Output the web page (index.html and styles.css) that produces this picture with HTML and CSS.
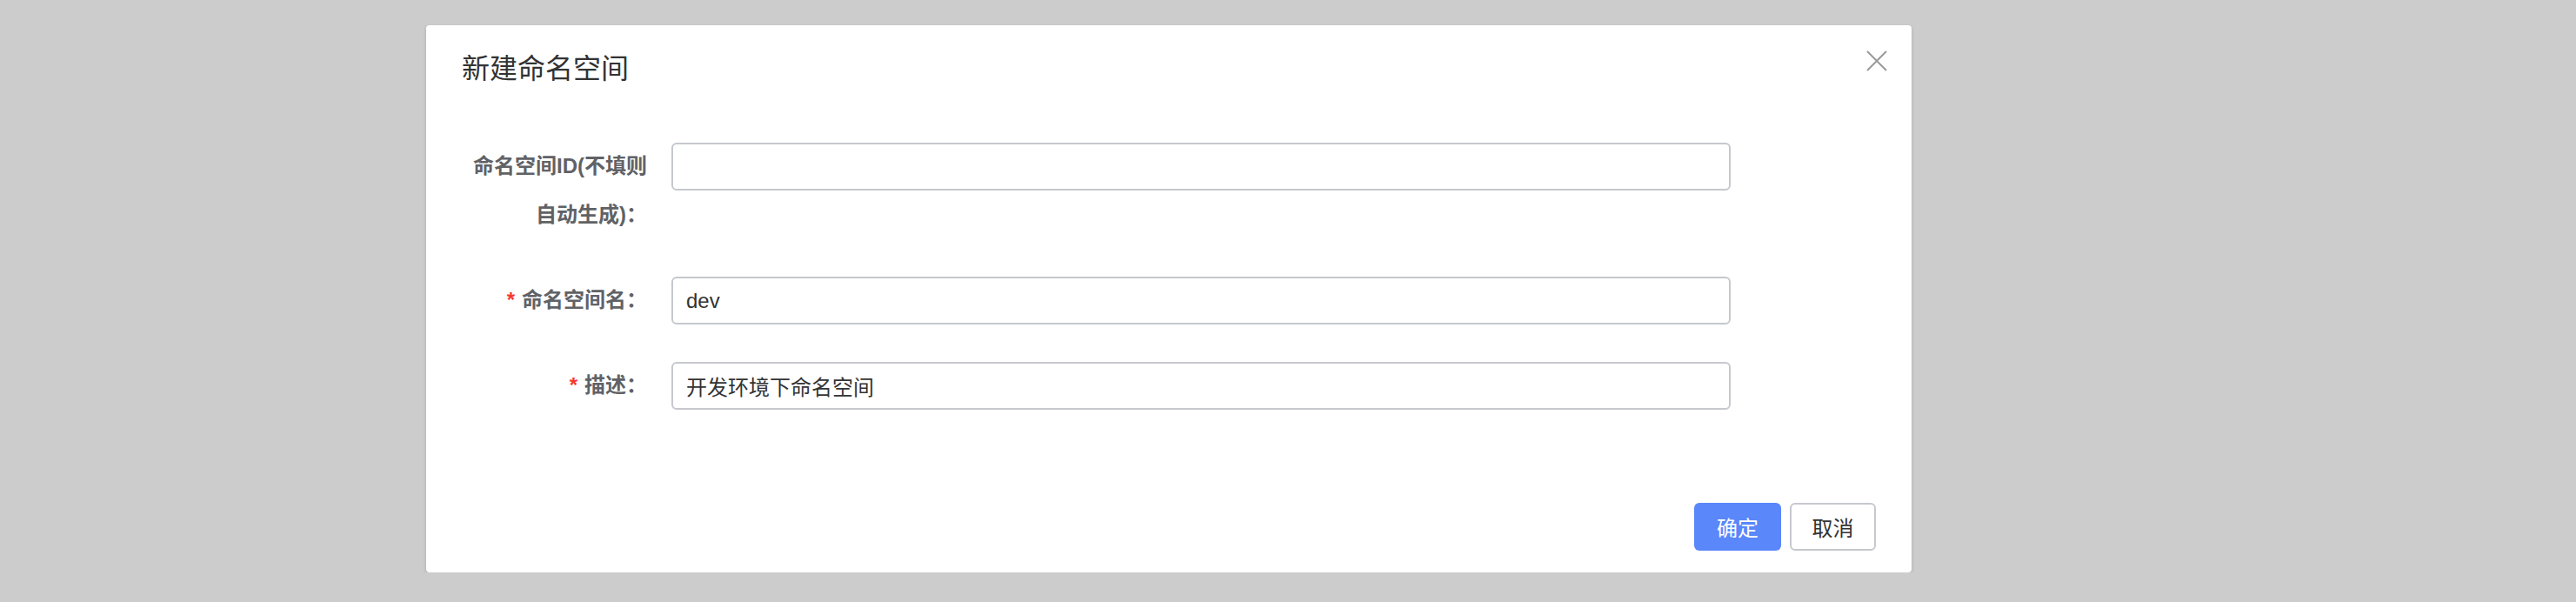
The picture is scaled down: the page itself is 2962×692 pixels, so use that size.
FILE: index.html
```html
<!DOCTYPE html>
<html lang="zh-CN">
<head>
<meta charset="utf-8">
<title>新建命名空间</title>
<link rel="stylesheet" href="styles.css">
</head>
<body>
<div class="dialog">
  <div class="dialog-header">
    <div class="dialog-title">新建命名空间</div>
    <button class="dialog-close" type="button" aria-label="关闭">
      <svg width="24" height="24" viewBox="0 0 24 24"><path d="M1 1 L23 23 M23 1 L1 23" stroke="#9a9a9a" stroke-width="2" fill="none"/></svg>
    </button>
  </div>
  <form class="dialog-body">
    <div class="form-item">
      <label class="form-label">命名空间ID(不填则<br>自动生成)：</label>
      <input class="form-input" type="text" value="">
    </div>
    <div class="form-item">
      <label class="form-label"><span class="required">*</span>命名空间名：</label>
      <input class="form-input" type="text" value="dev">
    </div>
    <div class="form-item">
      <label class="form-label"><span class="required">*</span>描述：</label>
      <input class="form-input" type="text" value="开发环境下命名空间">
    </div>
  </form>
  <div class="dialog-footer">
    <button class="btn btn-primary" type="button">确定</button>
    <button class="btn btn-default" type="button">取消</button>
  </div>
</div>
</body>
</html>
```
FILE: styles.css
```css
html, body {
  margin: 0;
  padding: 0;
}
body {
  background: #cccccc;
  font-family: "Liberation Sans", "Noto Sans CJK SC", sans-serif;
  padding-top: 29px;
}
.dialog {
  box-sizing: border-box;
  width: 1708px;
  height: 629px;
  margin-left: 490px;
  background: #ffffff;
  border-radius: 4px;
  box-shadow: 0 2px 4px rgba(0, 0, 0, 0.16);
  display: flex;
  flex-direction: column;
}
.dialog-header {
  display: flex;
  justify-content: space-between;
  align-items: flex-start;
  padding: 27px 28px 0 41px;
}
.dialog-title {
  font-family: "Noto Sans CJK SC", sans-serif;
  font-size: 32px;
  line-height: 40px;
  color: #333333;
}
.dialog-close {
  margin-top: 2px;
  padding: 0;
  border: 0;
  background: transparent;
  width: 24px;
  height: 24px;
  display: flex;
}
.dialog-body {
  margin: 68px 0 0 0;
  padding-left: 40px;
  display: flex;
  flex-direction: column;
  gap: 43px;
}
.form-item {
  display: flex;
  align-items: flex-start;
}
.form-label {
  width: 214px;
  margin-right: 28px;
  text-align: right;
  font-size: 24px;
  line-height: 56px;
  margin-top: -1px;
  font-weight: bold;
  color: #606266;
}
.required {
  color: #f5392a;
  margin-right: 8px;
}
.form-input {
  box-sizing: border-box;
  width: 1218px;
  height: 55px;
  margin: 0;
  padding: 0 15px;
  border: 2px solid #c6c8ce;
  border-radius: 6px;
  background: #ffffff;
  font-family: "Liberation Sans", "Noto Sans CJK SC", sans-serif;
  font-size: 24px;
  color: #333333;
  outline: none;
}
.dialog-footer {
  margin-top: auto;
  display: flex;
  justify-content: flex-end;
  gap: 10px;
  padding: 0 41px 25px 0;
}
.btn {
  box-sizing: border-box;
  height: 55px;
  border-radius: 6px;
  font-family: "Noto Sans CJK SC", sans-serif;
  font-size: 24px;
  padding: 0;
  margin: 0;
}
.btn-primary {
  width: 100px;
  background: #5a87f9;
  border: 0;
  color: #ffffff;
}
.btn-default {
  width: 99px;
  background: #ffffff;
  border: 2px solid #c6c8ce;
  color: #333333;
}
```
